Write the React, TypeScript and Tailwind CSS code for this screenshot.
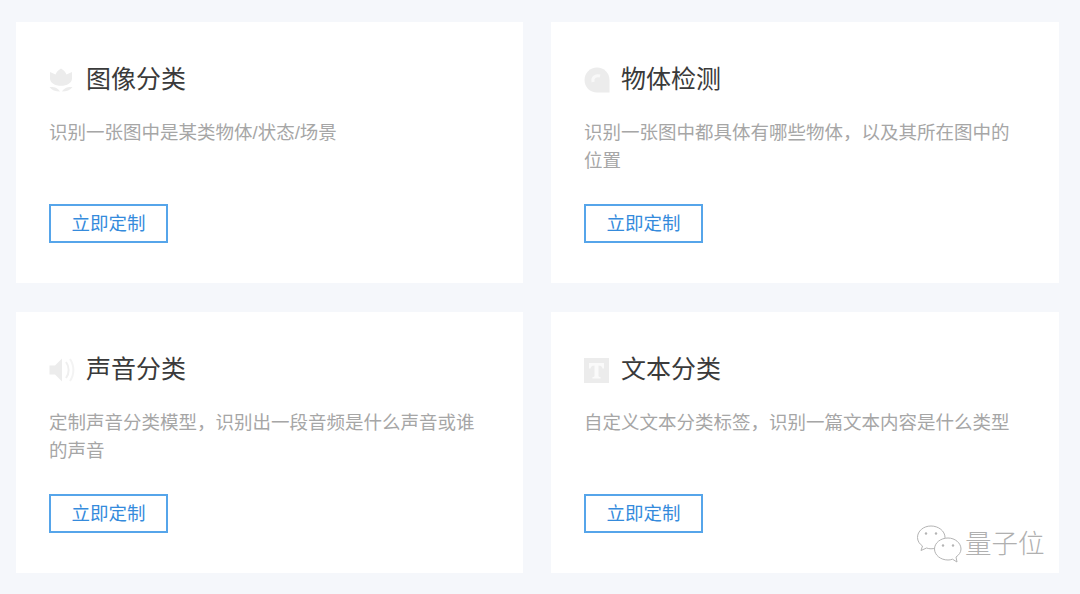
const FlowerIcon = () => (
  <svg width="24" height="24" viewBox="0 0 24 24" fill="#ececec">
    <path d="M1 4 6.5 6.5C7.5 4 9.5 1.8 12 0.5 14.5 1.8 16.5 4 17.5 6.5L23 4V10.5C23 15 18 17.8 12 17.8S1 15 1 10.5Z" />
    <path d="M0.5 19C4.5 18.6 9 19.6 11 23.5 6.5 23.5 2.5 22 0.5 19ZM23.5 19C19.5 18.6 15 19.6 13 23.5 17.5 23.5 21.5 22 23.5 19Z" />
  </svg>
);

const BubbleIcon = () => (
  <svg width="26" height="26" viewBox="0 0 26 26">
    <path
      fill="#ececec"
      d="M13 0.5C6 0.5 0.5 6 0.5 13S6 25.5 13 25.5H25.5V13C25.5 6 20 0.5 13 0.5Z"
    />
    <path fill="none" stroke="#f8f8f8" strokeWidth="3" d="M9 15C8 10 12 8 16 9" />
  </svg>
);

const SpeakerIcon = () => (
  <svg width="26" height="26" viewBox="0 0 26 26" fill="none">
    <path fill="#ececec" d="M0.5 8.5H6L13 1.5V24.5L6 17.5H0.5Z" />
    <path stroke="#efefef" strokeWidth="2" d="M17 5C20.5 9.5 20.5 16.5 17 21" />
    <path stroke="#f3f3f3" strokeWidth="2" d="M21 2C25.5 8.5 25.5 17.5 21 24" />
  </svg>
);

const TextIcon = () => (
  <svg width="25" height="25" viewBox="0 0 25 25">
    <rect width="25" height="25" fill="#ececec" />
    <path fill="#fafafa" d="M5 5H20V10.5H18.5C18 8.5 17 7.5 14.5 7.5V17.5C14.5 18.5 15 19 16.5 19V20.5H8.5V19C10 19 10.5 18.5 10.5 17.5V7.5C8 7.5 7 8.5 6.5 10.5H5Z" />
  </svg>
);

const cards = [
  {
    title: "图像分类",
    desc: "识别一张图中是某类物体/状态/场景",
    icon: <FlowerIcon />,
  },
  {
    title: "物体检测",
    desc: "识别一张图中都具体有哪些物体，以及其所在图中的位置",
    icon: <BubbleIcon />,
  },
  {
    title: "声音分类",
    desc: "定制声音分类模型，识别出一段音频是什么声音或谁的声音",
    icon: <SpeakerIcon />,
  },
  {
    title: "文本分类",
    desc: "自定义文本分类标签，识别一篇文本内容是什么类型",
    icon: <TextIcon />,
  },
];

const Card = ({ title, desc, icon }: (typeof cards)[number]) => (
  <div className="flex h-[261px] flex-col bg-white pl-[33px] pr-[32px] pt-[40px]">
    <div className="flex h-[34px] items-center">
      <div className="mt-[2px] flex w-[37px] items-center">{icon}</div>
      <h3 className="text-[25px] font-normal leading-[34px] text-[#3a3a3a]">{title}</h3>
    </div>
    <p className="mt-[23px] h-[56px] text-[18.5px] leading-[28px] text-[#a6a6a6]">{desc}</p>
    <button
      type="button"
      className="mt-[29px] h-[39px] w-[119px] border-2 border-[#56a5ea] text-[18.5px] text-[#358bdc]"
    >
      立即定制
    </button>
  </div>
);

export default function App() {
  return (
    <div className="relative h-[594px] w-[1080px] overflow-hidden bg-[#f5f7fb] font-['Liberation_Sans','Noto_Sans_CJK_SC',sans-serif]">
      <div className="grid grid-cols-[507px_508px] gap-x-[28px] gap-y-[29px] pl-[16px] pt-[22px]">
        {cards.map((card) => (
          <Card key={card.title} {...card} />
        ))}
      </div>

      {/* watermark */}
      <div className="absolute left-[916px] top-[524px] flex items-center gap-[3px]">
        <svg width="46" height="40" viewBox="0 0 46 40" fill="#ffffff" stroke="#b4b4b4" strokeWidth="1">
          <path d="M15 2C7.5 2 1.5 7 1.5 13.5C1.5 17 3.5 20 6.5 22L5 26.5L10.5 24C12 24.5 13.5 24.8 15 24.8C23 24.8 29 19.5 29 13.5C29 7 22.5 2 15 2Z" />
          <path d="M32 14C24.5 14 18.5 19 18.5 25C18.5 31 24.5 36 32 36C33.5 36 35 35.8 36.5 35.2L41 38L40 33C43 31 45 28.2 45 25C45 19 39 14 32 14Z" />
          <circle cx="10" cy="9.5" r="1.2" fill="#b4b4b4" stroke="none" />
          <circle cx="20" cy="9.5" r="1.2" fill="#b4b4b4" stroke="none" />
          <circle cx="27" cy="21.5" r="1.2" fill="#b4b4b4" stroke="none" />
          <circle cx="37" cy="21.5" r="1.2" fill="#b4b4b4" stroke="none" />
        </svg>
        <span className="text-[26.5px] font-light leading-[34px] text-[#b0b0b0] [text-shadow:0_0_1px_#ffffff]">
          量子位
        </span>
      </div>
    </div>
  );
}
